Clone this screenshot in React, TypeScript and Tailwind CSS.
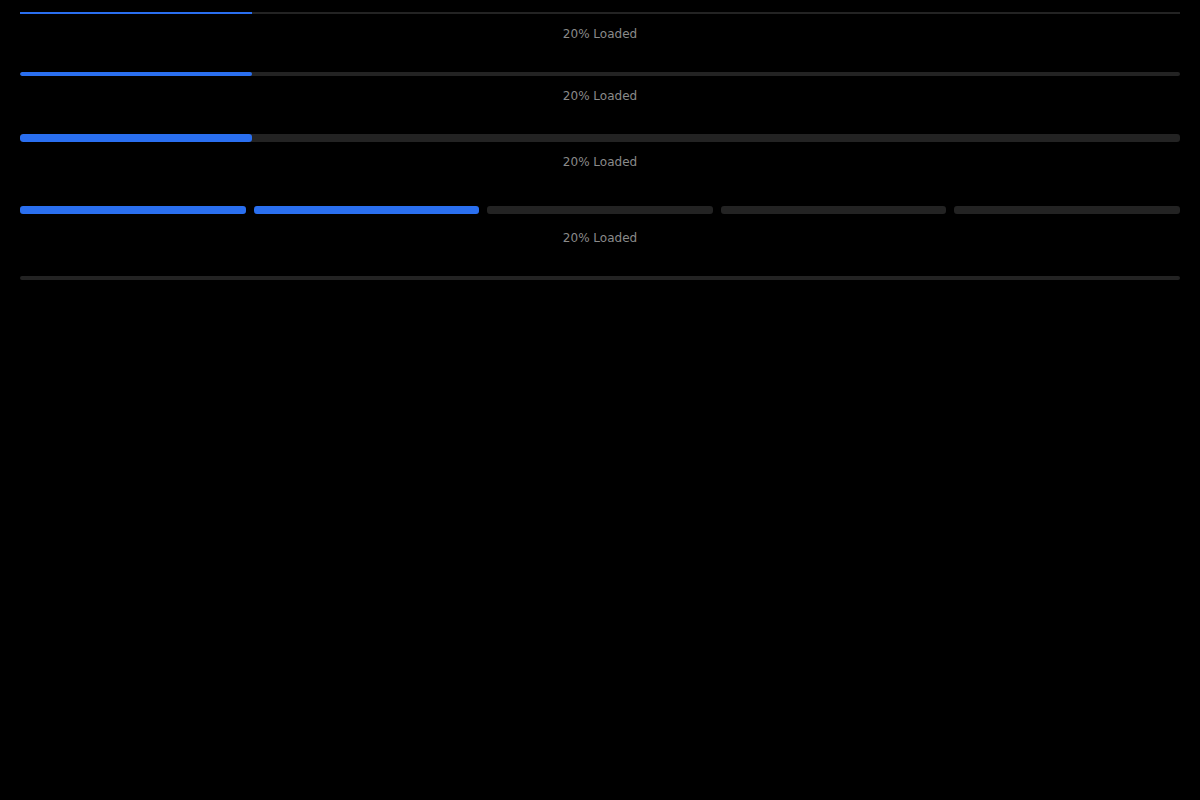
const percent = 20;

function Label() {
  return (
    <p className="text-center text-xs leading-4 text-[#8a8a8a] font-['DejaVu_Sans',sans-serif]">
      {percent}% Loaded
    </p>
  );
}

function Bar({ height, rounded }: { height: string; rounded: string }) {
  return (
    <div className={`w-full overflow-hidden bg-[#232323] ${height} ${rounded}`}>
      <div className={`h-full bg-[#2a6ff0] ${rounded}`} style={{ width: `${percent}%` }} />
    </div>
  );
}

export default function App() {
  const segments = [0, 1, 2, 3, 4];
  const filled = 2;

  return (
    <div className="min-h-screen w-full bg-black px-5 pt-3">
      {/* thin line */}
      <div className="h-[2px] w-full bg-[#232323]">
        <div className="h-full bg-[#2a6ff0]" style={{ width: `${percent}%` }} />
      </div>
      <div className="mt-3">
        <Label />
      </div>

      {/* medium */}
      <div className="mt-[30px]">
        <Bar height="h-1" rounded="rounded-full" />
      </div>
      <div className="mt-3">
        <Label />
      </div>

      {/* thick */}
      <div className="mt-[30px]">
        <Bar height="h-2" rounded="rounded-[3px]" />
      </div>
      <div className="mt-3">
        <Label />
      </div>

      {/* segmented */}
      <div className="mt-9 flex gap-2">
        {segments.map((i) => (
          <div
            key={i}
            className={`h-2 flex-1 rounded-[3px] ${i < filled ? "bg-[#2a6ff0]" : "bg-[#232323]"}`}
          />
        ))}
      </div>
      <div className="mt-4">
        <Label />
      </div>

      {/* empty track */}
      <div className="mt-[30px] h-1 w-full rounded-full bg-[#232323]" />
    </div>
  );
}
